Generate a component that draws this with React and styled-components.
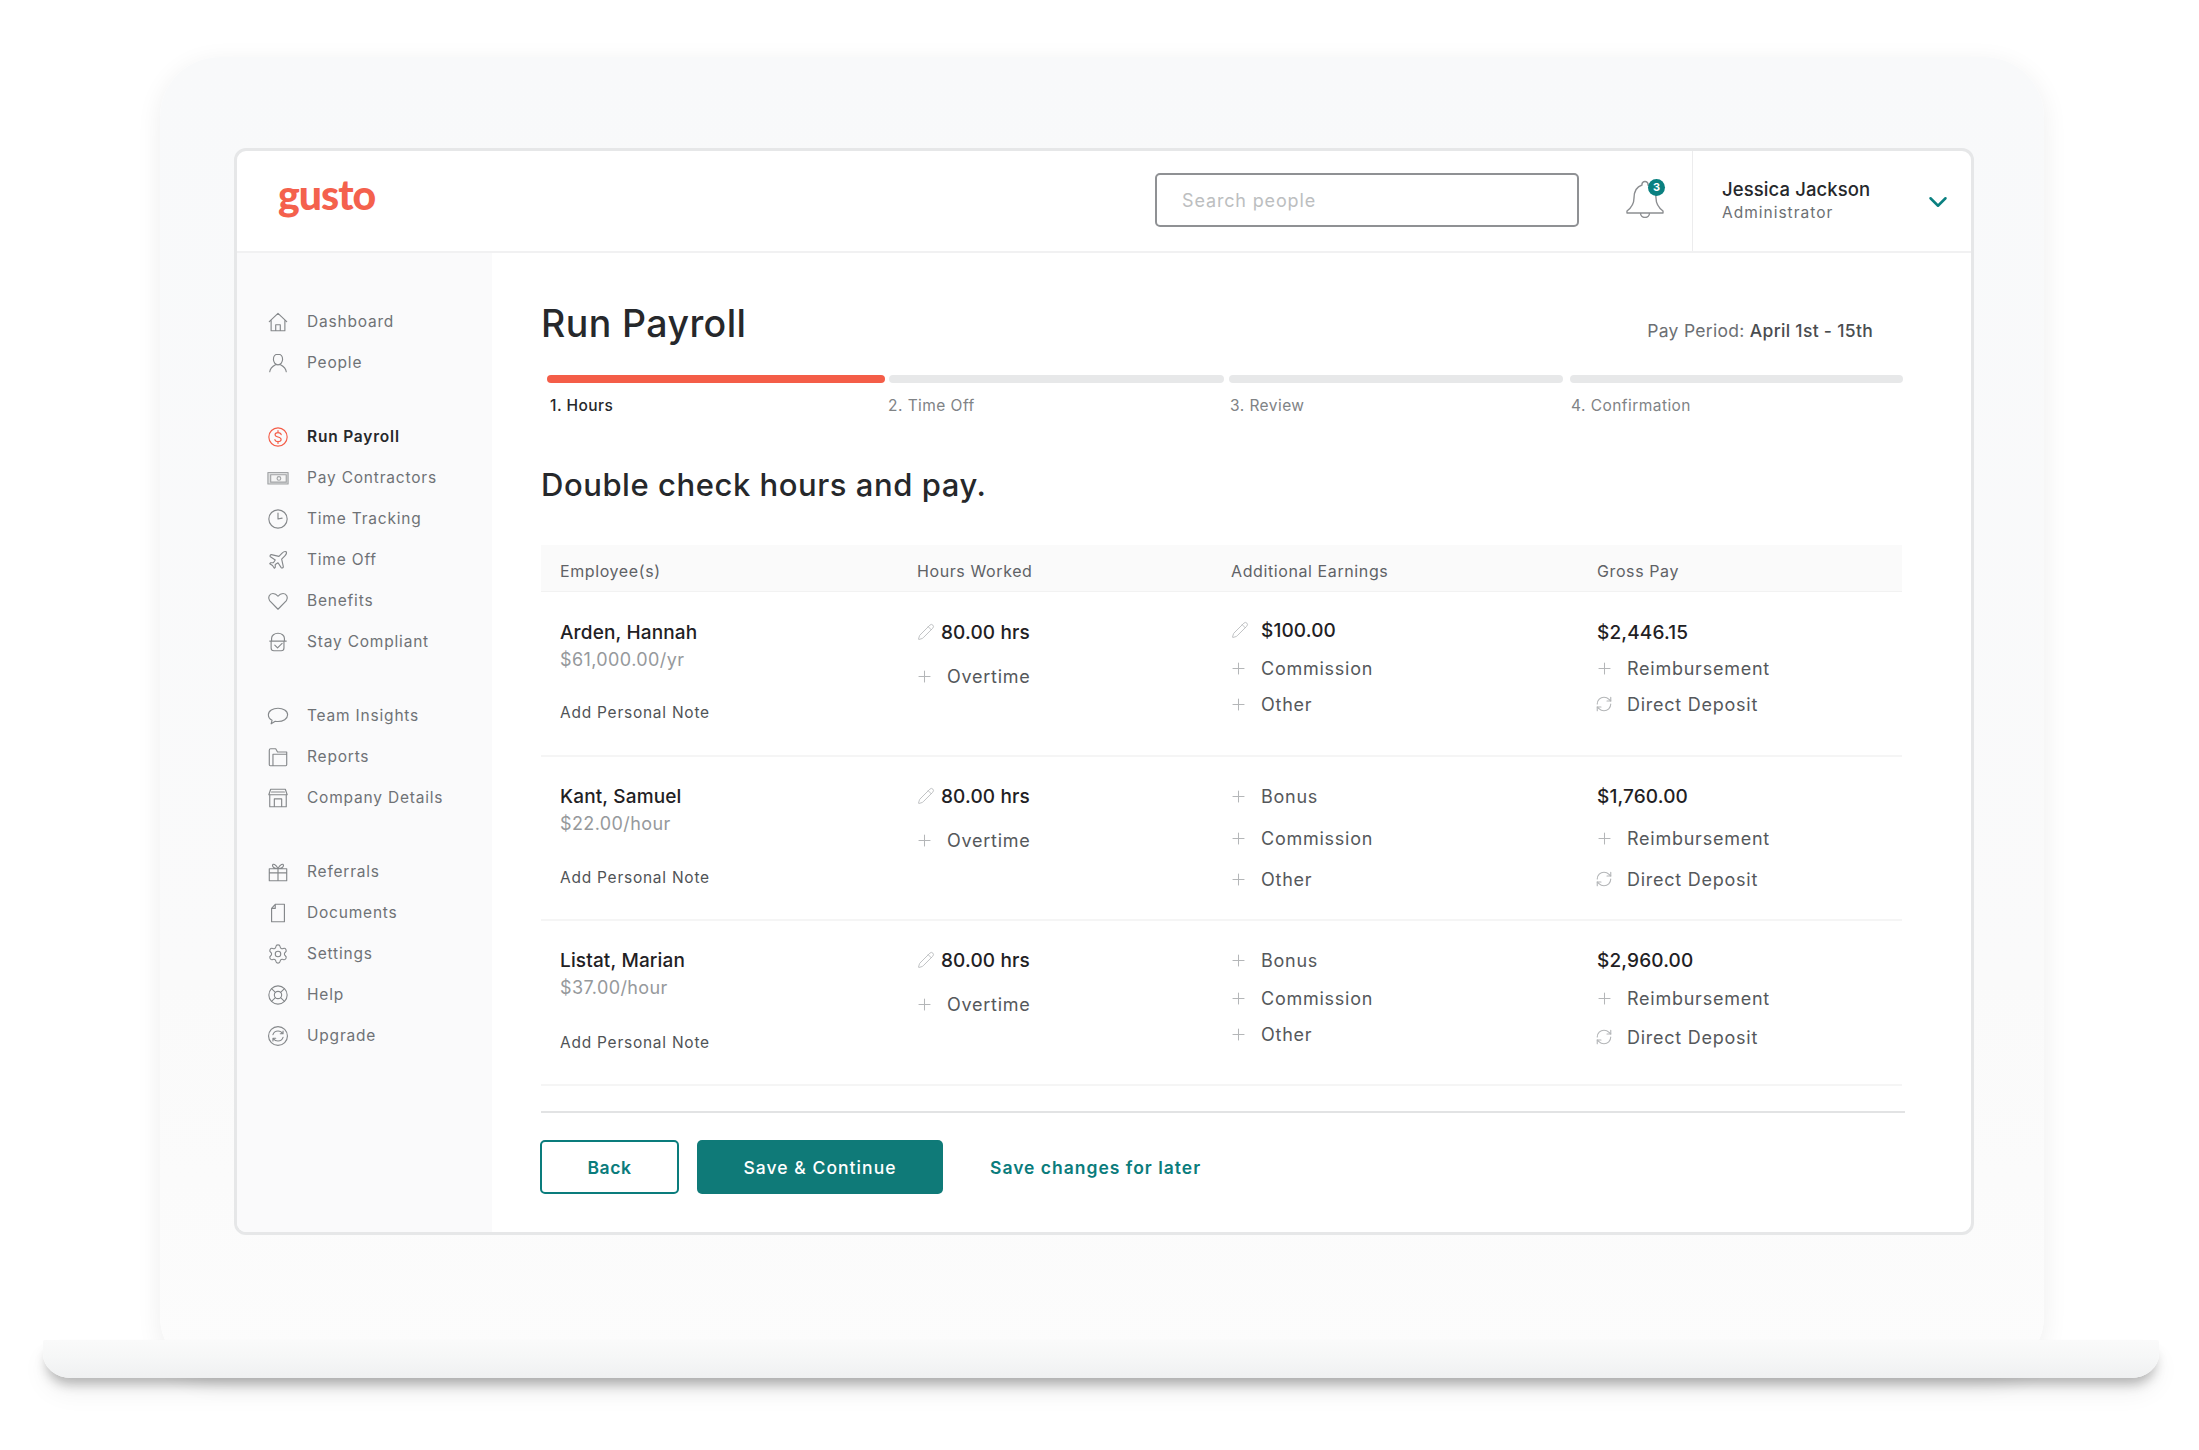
import React from "react";
import styled, { createGlobalStyle } from "styled-components";
import { Settings, LifeBuoy, ChevronDown, Plus, Pencil, RefreshCw } from "lucide-react";

const Global = createGlobalStyle`
  html, body { margin: 0; padding: 0; background: #fff; }
  body { font-family: Inter, "Noto Sans", Arial, sans-serif; }
  * { box-sizing: border-box; }
`;

const Page = styled.div`
  width: 2199px; height: 1450px; padding: 57px 40px 0 43px; overflow: hidden; background: #fff;
`;
const Lid = styled.div`
  margin: 0 115px 0 117px; height: 1319px; padding: 91px 70px 0 74px;
  border-radius: 60px;
  background: linear-gradient(180deg, #f8f9fa 0%, #fafafa 70%, #fcfcfc 100%);
  box-shadow: 0 6px 26px rgba(0, 0, 0, .07);
`;
const Base = styled.div`
  position: relative; height: 38px; width: 2116px; margin-top: -36px;
  border-radius: 2px 2px 28px 28px / 2px 2px 24px 24px;
  background: linear-gradient(180deg, #fafafa 0%, #f6f7f7 45%, #eff0f1 100%);
  box-shadow: 0 10px 12px -4px rgba(0, 0, 0, .27), 0 16px 24px rgba(0, 0, 0, .05);
`;
const Screen = styled.div`
  height: 1087px; border: 3px solid #e6e7e8; border-radius: 12px; background: #fff;
  display: flex; flex-direction: column; overflow: hidden;
`;
const Header = styled.header`
  height: 102px; flex: none; display: flex; align-items: stretch; border-bottom: 2px solid #f1f1f2;
`;
const Logo = styled.div`
  padding-left: 41px; margin-top: 19px; font-family: Lato, sans-serif; font-size: 41px; line-height: 50px; font-weight: 900;
  color: #f4614d; letter-spacing: -1px;
`;
const Search = styled.div`
  margin: 22px 0 0 auto; width: 424px; height: 54px; border: 2px solid #8f9194; border-radius: 5px;
  padding-left: 25px; display: flex; align-items: center;
  font-size: 18px; letter-spacing: .85px; color: #bcbec0;
`;
const BellBox = styled.div`
  position: relative; width: 40px; height: 40px; margin: 29px 27px 0 46px; color: #8c8e91;
`;
const Badge = styled.span`
  position: absolute; right: 0; top: -1px; width: 17px; height: 17px; border-radius: 50%;
  background: #0a8080; color: #fff; font-size: 11px; line-height: 17px; text-align: center; font-weight: 700;
`;
const User = styled.div`
  width: 279px; border-left: 1px solid #ececed; padding: 0 18px 0 29px;
  display: flex; align-items: center; justify-content: space-between;
`;
const UserText = styled.div`
  display: flex; flex-direction: column; margin-top: -3px;
`;
const UserName = styled.div`
  font-size: 18.5px; line-height: 26px; font-weight: 500; color: #26282b; letter-spacing: .1px;
`;
const UserRole = styled.div`
  font-size: 15.5px; line-height: 20px; color: #6c6f73; letter-spacing: 1px; margin-top: 1px;
`;
const Chevron = styled.span`
  color: #0a8080; display: flex; margin-top: 2px;
`;
const Body = styled.div`
  flex: 1; display: flex; min-height: 0;
`;
const Side = styled.nav`
  width: 255px; flex: none; background: #fafafb; padding-top: 48px;
`;
const NavGroup = styled.div`
  & + & { margin-top: 33px; }
`;
const NavItem = styled.div`
  height: 41px; padding-left: 30px; display: flex; align-items: center; gap: 18px;
  font-size: 15.5px; letter-spacing: .8px;
  color: ${p => (p.$active ? "#26282b" : "#6f7276")};
  font-weight: ${p => (p.$active ? 600 : 400)};
`;
const Main = styled.main`
  flex: 1; padding-left: 49px; min-width: 0;
`;
const TitleRow = styled.div`
  margin-top: 48px; height: 46px; display: flex; align-items: center; justify-content: space-between;
  padding-right: 98px;
`;
const Title = styled.h1`
  margin: 0; font-size: 37.5px; line-height: 46px; font-weight: 500; color: #26282b; letter-spacing: .4px;
`;
const Period = styled.div`
  font-size: 17.5px; color: #6c6f73; letter-spacing: .3px; margin-top: 12px;
  b { font-weight: 500; color: #4a4d50; }
`;
const Steps = styled.div`
  margin: 28px 0 0 6px; display: flex;
`;
const Step = styled.div`
  flex: none; width: ${p => p.$w}px; margin-right: ${p => p.$gap}px;
`;
const Bar = styled.div`
  height: 8px; border-radius: 4px; background: ${p => (p.$on ? "#f45d48" : "#e7e8e9")};
`;
const StepLabel = styled.div`
  margin: 13px 0 0 ${p => p.$x}px; font-size: 15.5px; line-height: 20px; letter-spacing: .45px;
  color: ${p => (p.$on ? "#26282b" : "#808386")};
  font-weight: ${p => (p.$on ? 500 : 400)};
`;
const Heading = styled.h2`
  margin: 45px 0 0; font-size: 31px; line-height: 48px; font-weight: 500; color: #26282b; letter-spacing: .55px;
`;
const Table = styled.div`
  margin-top: 36px; width: 1361px;
`;
const Columns = styled.div`
  display: grid; grid-template-columns: 357px 314px 366px 1fr; padding-left: 19px;
`;
const Head = styled(Columns)`
  height: 47px; align-items: center; background: #fafafa; border-bottom: 1px solid #f2f2f2;
  font-size: 16px; letter-spacing: .6px; color: #5f6266; padding-top: 5px;
`;
const Row = styled(Columns)`
  height: ${p => p.$h}px; border-bottom: 2px solid #f5f5f5;
`;
const Cell = styled.div`
  display: flex; flex-direction: column;
`;
const emphasised = k => k === "name" || k === "value";
const Line = styled.div`
  height: 24px; display: flex; align-items: center; white-space: nowrap; margin-top: ${p => p.$mt}px;
  font-size: ${p => ({ name: 19, value: 19, sub: 18, note: 15.5 }[p.$kind] || 18)}px;
  letter-spacing: ${p => (emphasised(p.$kind) ? ".15px" : p.$kind === "sub" ? ".4px" : ".75px")};
  font-weight: ${p => (emphasised(p.$kind) ? 500 : 400)};
  color: ${p => ({ name: "#1f2124", value: "#1f2124", sub: "#96999c", note: "#505356" }[p.$kind] || "#55585b")};
`;
const IconSlot = styled.span`
  flex: none; width: ${p => p.$w}px; display: flex; align-items: center; color: #b4b6b8;
`;
const Footer = styled.div`
  margin-top: 25px; width: 1364px; padding-top: 27px; border-top: 2px solid #e2e3e4;
  display: flex; align-items: center;
`;
const BackButton = styled.button`
  width: 139px; height: 54px; margin-left: -1px; border: 2px solid #0a7c7c; border-radius: 5px; background: #fff;
  color: #0a7c7c; font: 600 17.5px Inter, sans-serif; letter-spacing: .6px;
`;
const SaveButton = styled.button`
  width: 246px; height: 54px; margin-left: 18px; border: 0; border-radius: 5px; background: #0f7a78;
  color: #fff; font: 500 17.5px Inter, sans-serif; letter-spacing: 1.05px;
`;
const LaterLink = styled.a`
  margin-left: 47px; color: #0a7c7c; font-size: 17.5px; font-weight: 600; letter-spacing: 1px;
`;

const Glyph = ({ d, color = "#85888b", children }) => (
  <svg width="22" height="22" viewBox="0 0 24 24" fill="none" stroke={color} strokeWidth="1.25" strokeLinecap="round" strokeLinejoin="round">
    {d && <path d={d} />}
    {children}
  </svg>
);
const thin = { size: 22, color: "#85888b", strokeWidth: 1.2 };

const BellIcon = () => (
  <svg width="40" height="38" viewBox="0 0 40 38" fill="none" stroke="currentColor" strokeWidth="1.4" strokeLinejoin="round">
    <path d="M20 1.500a3 3 0 0 0-3 3.500C11 7 9 12 9 18c0 6-3 10-7 13v2h36v-2c-4-3-7-7-7-13 0-6-2-11-8-13a3 3 0 0 0-3-3.500zM15.500 33a4.500 4.500 0 0 0 9 0" />
  </svg>
);

const nav = [
  [
    ["Dashboard", <Glyph d="M2.500 11.500 12 2.500l9.500 9M4.500 10v11.500h15V10M9.500 21.500V15h5v6.500" />],
    ["People", <Glyph d="M12 2.500c-3.300 0-5 2.500-5 5.500s2 6 5 6 5-3 5-6-1.700-5.500-5-5.500zM3 21.500c.5-4 3.500-6 6.200-7.500M21 21.500c-.5-4-3.500-6-6.200-7.500" />],
  ],
  [
    ["Run Payroll", <Glyph color="#f45d48"><circle cx="12" cy="12" r="10" /><path d="M15.500 9.500c-.3-1.500-1.800-2.300-3.500-2.300S8.800 8 8.800 9.500s1.500 2 3.200 2.500 3.400 1 3.400 2.600-1.600 2.400-3.400 2.400-3.200-.8-3.400-2.300M12 5v2.200M12 17v2" /></Glyph>, true],
    ["Pay Contractors", <Glyph><rect x="1" y="6" width="22" height="12.500" fill="#dcddde" stroke="#a2a4a6" /><rect x="4" y="8.500" width="17" height="8" fill="#f4f4f4" stroke="#a2a4a6" /><circle cx="13" cy="12.500" r="2" stroke="#a2a4a6" /></Glyph>],
    ["Time Tracking", <Glyph><circle cx="12" cy="12" r="10" /><path d="M12 5.500V12l4.500-1" /></Glyph>],
    ["Time Off", <Glyph d="M17.800 19.200 16 11l3.500-3.500C21 6 21.500 4 21 3c-1-.5-3 0-4.500 1.500L13 8 4.800 6.200c-.5-.1-.9.1-1.100.5l-.3.5c-.2.500-.1 1 .3 1.300L9 12l-2 3H4l-1 1 3 2 2 3 1-1v-3l3-2 3.500 5.300c.3.400.8.500 1.300.3l.5-.2c.4-.3.6-.7.5-1.200z" />],
    ["Benefits", <Glyph d="M12 21 2.800 11.500C.5 8.500 2.500 3.800 6.500 3.800c2.500 0 4.300 1.400 5.500 3 1.200-1.600 3-3 5.500-3 4 0 6 4.700 3.700 7.700z" />],
    ["Stay Compliant", <Glyph d="M5 10V8c0-3 3-5.500 7-5.500S19 5 19 8v2M3 11h18M4.500 11v7.500c0 2 1 3 3 3h8c2 0 3-1 3-3V11M8.500 15.500l3 3 5-5" />],
  ],
  [
    ["Team Insights", <Glyph d="M12 3.500c5.500 0 10.500 2.800 10.500 7.200s-5 7.300-10.500 7.300c-1 0-2-.1-3-.3l-4.500 2.800 1-3.800C3 15.500 1.500 13.300 1.500 10.700c0-4.400 5-7.200 10.500-7.200z" />],
    ["Reports", <Glyph d="M2.500 20.500V4.500c0-1 .5-1.500 1.500-1.500h5.500l2 3.500H21.500v14c0 .7-.3 1-1 1H3.500c-.7 0-1-.3-1-1zM6.500 21.500V9h15" />],
    ["Company Details", <Glyph d="M4 2.500h16l2 6H2zM3 8.500v13h18v-13M8 21.500V13h8v8.500M2 8.500h20M5 5.500h14" />],
  ],
  [
    ["Referrals", <Glyph d="M2.500 8.500h19v13h-19zM2.500 13h19M12 8.500v13M12 8.500C10 4 6 2 6 5c0 2 3 3.500 6 3.500zm0 0C14 4 18 2 18 5c0 2-3 3.500-6 3.500z" />],
    ["Documents", <Glyph d="M9 2.500h10v19H5V7zM5 7h4V2.500" />],
    ["Settings", <Settings {...thin} />],
    ["Help", <LifeBuoy {...thin} />],
    ["Upgrade", <Glyph><circle cx="12" cy="12" r="10.300" /><path d="M6.500 10.500C7.500 7.500 9.500 6.500 12 6.500s4 1 5 3M17.500 13.500c-1 3-3 4-5.500 4s-4-1-5-2.500M17.500 6.500v3h-3M6.500 17.500v-3h3" /></Glyph>],
  ],
];

const steps = [
  { label: "1. Hours", w: 338, gap: 4, x: 3, on: true },
  { label: "2. Time Off", w: 335, gap: 5, x: -1 },
  { label: "3. Review", w: 334, gap: 7, x: 1 },
  { label: "4. Confirmation", w: 333, gap: 0, x: 1 },
];

const pen = 1, plus = 2, sync = 3;
const rows = [
  {
    h: 165,
    cells: [
      [[40, "name", "Arden, Hannah"], [67, "sub", "$61,000.00/yr"], [120, "note", "Add Personal Note"]],
      [[40, "value", "80.00 hrs", pen, 24], [84, "item", "Overtime", plus, 30]],
      [[38, "value", "$100.00", pen, 30], [76, "item", "Commission", plus, 30], [112, "item", "Other", plus, 30]],
      [[40, "value", "$2,446.15"], [76, "item", "Reimbursement", plus, 30], [112, "item", "Direct Deposit", sync, 30]],
    ],
  },
  {
    h: 164,
    cells: [
      [[39, "name", "Kant, Samuel"], [66, "sub", "$22.00/hour"], [120, "note", "Add Personal Note"]],
      [[39, "value", "80.00 hrs", pen, 24], [83, "item", "Overtime", plus, 30]],
      [[39, "item", "Bonus", plus, 30], [81, "item", "Commission", plus, 30], [122, "item", "Other", plus, 30]],
      [[39, "value", "$1,760.00"], [81, "item", "Reimbursement", plus, 30], [122, "item", "Direct Deposit", sync, 30]],
    ],
  },
  {
    h: 165,
    cells: [
      [[39, "name", "Listat, Marian"], [66, "sub", "$37.00/hour"], [121, "note", "Add Personal Note"]],
      [[39, "value", "80.00 hrs", pen, 24], [83, "item", "Overtime", plus, 30]],
      [[39, "item", "Bonus", plus, 30], [77, "item", "Commission", plus, 30], [113, "item", "Other", plus, 30]],
      [[39, "value", "$2,960.00"], [77, "item", "Reimbursement", plus, 30], [116, "item", "Direct Deposit", sync, 30]],
    ],
  },
];

const Shift = styled.span`
  display: flex; margin-left: -2px;
`;
const rowIcon = kind => {
  if (kind === pen) return <Pencil size={18} strokeWidth={1.1} />;
  if (kind === plus) return <Shift><Plus size={19} strokeWidth={1.3} /></Shift>;
  return <Shift><RefreshCw size={18} strokeWidth={1.5} /></Shift>;
};

const RowCell = ({ lines }) => {
  let bottom = 0;
  return (
    <Cell>
      {lines.map(([y, kind, text, icon, slot]) => {
        const mt = y - 12 - bottom;
        bottom = y + 12;
        return (
          <Line key={text} $kind={kind} $mt={mt}>
            {icon && <IconSlot $w={slot}>{rowIcon(icon)}</IconSlot>}
            {text}
          </Line>
        );
      })}
    </Cell>
  );
};

export default function App() {
  return (
    <Page>
      <Global />
      <Lid>
        <Screen>
          <Header>
            <Logo>gusto</Logo>
            <Search>Search people</Search>
            <BellBox>
              <BellIcon />
              <Badge>3</Badge>
            </BellBox>
            <User>
              <UserText>
                <UserName>Jessica Jackson</UserName>
                <UserRole>Administrator</UserRole>
              </UserText>
              <Chevron><ChevronDown size={30} strokeWidth={2} /></Chevron>
            </User>
          </Header>
          <Body>
            <Side>
              {nav.map((group, i) => (
                <NavGroup key={i}>
                  {group.map(([label, icon, active]) => (
                    <NavItem key={label} $active={active}>{icon}{label}</NavItem>
                  ))}
                </NavGroup>
              ))}
            </Side>
            <Main>
              <TitleRow>
                <Title>Run Payroll</Title>
                <Period>Pay Period: <b>April 1st - 15th</b></Period>
              </TitleRow>
              <Steps>
                {steps.map(s => (
                  <Step key={s.label} $w={s.w} $gap={s.gap}>
                    <Bar $on={s.on} />
                    <StepLabel $on={s.on} $x={s.x}>{s.label}</StepLabel>
                  </Step>
                ))}
              </Steps>
              <Heading>Double check hours and pay.</Heading>
              <Table>
                <Head>
                  <div>Employee(s)</div>
                  <div>Hours Worked</div>
                  <div>Additional Earnings</div>
                  <div>Gross Pay</div>
                </Head>
                {rows.map(r => (
                  <Row key={r.cells[0][0][2]} $h={r.h}>
                    {r.cells.map((lines, i) => <RowCell key={i} lines={lines} />)}
                  </Row>
                ))}
              </Table>
              <Footer>
                <BackButton>Back</BackButton>
                <SaveButton>Save &amp; Continue</SaveButton>
                <LaterLink>Save changes for later</LaterLink>
              </Footer>
            </Main>
          </Body>
        </Screen>
      </Lid>
      <Base />
    </Page>
  );
}
